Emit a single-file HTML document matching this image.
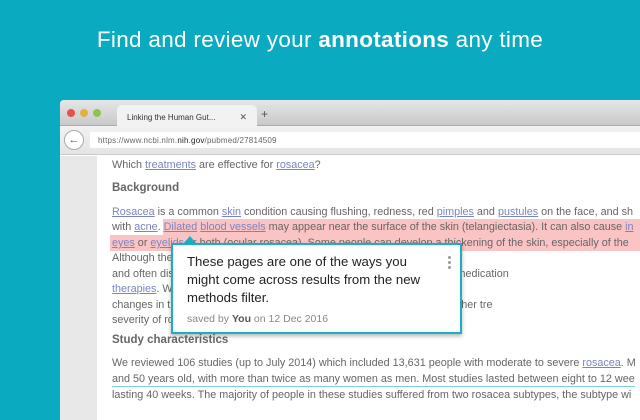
<!DOCTYPE html>
<html><head><meta charset="utf-8"><style>
*{margin:0;padding:0;box-sizing:border-box}
body{width:640px;height:400px;overflow:hidden;background:#0aabc1;font-family:"Liberation Sans",Arial,sans-serif;position:relative}
.title{position:absolute;top:27px;left:0;width:640px;text-align:center;color:#fff;font-size:22.5px;letter-spacing:0.3px}
.win{position:absolute;left:60px;top:100px;width:600px;height:320px;background:#fff;border-radius:4px 0 0 0;overflow:hidden}
.tabbar{height:26px;background:linear-gradient(#e6e6e6,#c9c9c9);border-bottom:1px solid #aaa;position:relative}
.dot{position:absolute;top:9px;width:8px;height:8px;border-radius:50%}
.tab{position:absolute;left:57px;top:5px;width:140px;height:22px;background:#f2f2f2;border-radius:5px 5px 0 0;font-size:8px;color:#333;padding:8px 0 0 10px}
.tab span{position:absolute;right:10px;top:7px;color:#555;font-size:9px}
.plus{position:absolute;left:201px;top:7px;font-size:12px;color:#555}
.urlbar{height:29px;background:linear-gradient(#f2f2f2,#e4e4e4);position:relative;border-bottom:1px solid #ccc}
.url{position:absolute;left:30px;top:6px;right:0;height:16px;background:#fff;font-size:8px;color:#666;padding:4px 0 0 8px;letter-spacing:0.2px}
.url b{color:#222;font-weight:normal}
.back{position:absolute;left:4px;top:4px;width:20px;height:20px;border-radius:50%;background:#fff;border:1px solid #aaa;font-size:11px;color:#555;text-align:center;line-height:18px}
.side{position:absolute;left:0;top:56px;width:37px;bottom:0;background:#e8e8e8}
.content{position:absolute;left:52px;top:56px;font-size:10.8px;color:#666;white-space:nowrap}
.l{position:absolute;left:0;height:16px;line-height:16px}
a{color:#7a85c0;text-decoration:underline}
h4{font-size:11.5px;color:#666}
.hl{position:absolute;background:#fbc4c4}
.pop{position:absolute;left:171px;top:243px;width:291px;height:91px;background:#fff;border:2px solid #1ab0c4;box-shadow:0 2px 4px rgba(0,0,0,.3);font-family:"Liberation Sans",Arial,sans-serif}
.pop p{position:absolute;left:14px;top:8px;font-size:13.2px;line-height:18px;color:#222;width:250px}
.pop .s{position:absolute;left:14px;top:68px;font-size:10.5px;color:#888}
.pop .s b{color:#555}
.dots{position:absolute;left:275px;top:11px;width:4px}
.dots i{display:block;width:3px;height:3px;background:#999;border-radius:50%;margin-bottom:2px}
.arrow{position:absolute;left:183px;top:236px;width:0;height:0;border-left:7px solid transparent;border-right:7px solid transparent;border-bottom:8px solid #1ab0c4}
</style></head><body>
<div class="title">Find and review your <b>annotations</b> any time</div>
<div class="win">
 <div class="tabbar">
  <div class="dot" style="left:7px;background:#e5524a"></div>
  <div class="dot" style="left:20px;background:#e4b23c"></div>
  <div class="dot" style="left:33px;background:#8cc454"></div>
  <div class="tab">Linking the Human Gut...<span>✕</span></div>
  <div class="plus">+</div>
 </div>
 <div class="urlbar"><div class="back">←</div><div class="url">https://www.ncbi.nlm.<b>nih.gov</b>/pubmed/27814509</div></div>
 <div class="side"></div>
</div>
<div class="hl" style="left:163px;top:219px;width:477px;height:16px"></div>
<div class="hl" style="left:110px;top:235px;width:530px;height:16px"></div>
<div class="content" style="left:112px;top:0">
 <div class="l" style="top:157px">Which <a>treatments</a> are effective for <a>rosacea</a>?</div>
 <div class="l" style="top:180px"><h4>Background</h4></div>
 <div class="l" style="top:204px"><a>Rosacea</a> is a common <a>skin</a> condition causing flushing, redness, red <a>pimples</a> and <a>pustules</a> on the face, and sh</div>
 <div class="l" style="top:219px">with <a>acne</a>. <a>Dilated</a> <a>blood vessels</a> may appear near the surface of the skin (telangiectasia). It can also cause <a>in</a></div>
 <div class="l" style="top:235px"><a>eyes</a> or <a>eyelids</a> or both (ocular rosacea). Some people can develop a thickening of the skin, especially of the</div>
 <div class="l" style="top:250px">Although there are many treatments that are available for this persistent (</div>
 <div class="l" style="top:266px">and often distressing condition, applied directly to the skin (<a>topical</a>), <a>oral</a> medication</div>
 <div class="l" style="top:281px"><a>therapies</a>. We wanted to discover if the treatments changed their qual</div>
 <div class="l" style="top:297px">changes in the skin. In this review of studies, we wanted to discover whether tre</div>
 <div class="l" style="top:312px">severity of rosacea and how long it disappeared and reappeared.</div>
 <div class="l" style="top:332px"><h4>Study characteristics</h4></div>
 <div class="l" style="top:355px">We reviewed 106 studies (up to July 2014) which included 13,631 people with moderate to severe <a>rosacea</a>. M</div>
 <div class="l" style="top:371px;border-bottom:1px solid #7fd0e0">and 50 years old, with more than twice as many women as men. Most studies lasted between eight to 12 wee</div>
 <div class="l" style="top:387px">lasting 40 weeks. The majority of people in these studies suffered from two rosacea subtypes, the subtype wi</div>
</div>
<div class="arrow"></div>
<div class="pop">
 <p>These pages are one of the ways you might come across results from the new methods filter.</p>
 <div class="s">saved by <b>You</b> on 12 Dec 2016</div>
 <div class="dots"><i></i><i></i><i></i></div>
</div>
</body></html>
